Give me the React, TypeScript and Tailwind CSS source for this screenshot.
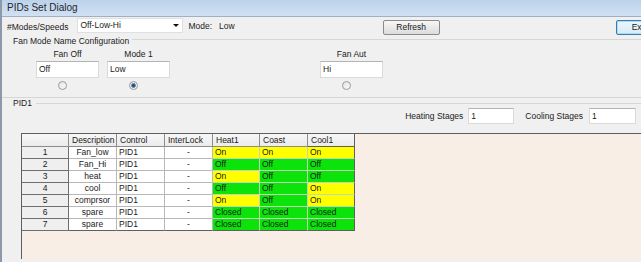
import React from 'react';

type Cell = 'On' | 'Off' | 'Closed';

const rows: { n: number; desc: string; states: Cell[] }[] = [
  { n: 1, desc: 'Fan_low', states: ['On', 'On', 'On'] },
  { n: 2, desc: 'Fan_Hi', states: ['Off', 'Off', 'Off'] },
  { n: 3, desc: 'heat', states: ['On', 'Off', 'Off'] },
  { n: 4, desc: 'cool', states: ['Off', 'Off', 'On'] },
  { n: 5, desc: 'comprsor', states: ['On', 'Off', 'On'] },
  { n: 6, desc: 'spare', states: ['Closed', 'Closed', 'Closed'] },
  { n: 7, desc: 'spare', states: ['Closed', 'Closed', 'Closed'] },
];

function Radio({ checked }: { checked?: boolean }) {
  return (
    <div className="w-[9px] h-[9px] rounded-full border border-[#9a9a9a] bg-gradient-to-br from-[#e4e4e4] to-[#fafafa] flex items-center justify-center">
      {checked && <div className="w-[5px] h-[5px] rounded-full bg-[#1d4e7c] border border-[#5d8ab3]" />}
    </div>
  );
}

function TextBox({ value, w }: { value: string; w: string }) {
  return (
    <div className={`${w} shrink-0 bg-white border border-[#dadada] border-t-[#b4b4b4] flex items-center pl-[2px]`}>
      {value}
    </div>
  );
}

export default function App() {
  const cellColor = (s: Cell) => (s === 'On' ? 'bg-[#ffff00]' : 'bg-[#0be30b]');

  return (
    <div className="w-[641px] h-[262px] overflow-hidden bg-[#f0f0f0] border-l-2 border-[#8d99a8] text-[8.5px] leading-none text-[#1a1a1a] font-['Liberation_Sans',Arial,sans-serif] flex flex-col">
      {/* title bar */}
      <div className="h-[17px] shrink-0 bg-gradient-to-b from-[#bcd2ea] to-[#d1e1f2] border-b border-[#9fb0c3] flex items-center pl-[5px] text-[10px] text-[#1e2630]">
        PIDs Set Dialog
      </div>

      {/* modes row */}
      <div className="h-[19px] shrink-0 flex items-start whitespace-nowrap">
        <span className="shrink-0 ml-[5px] mt-[6px]">#Modes/Speeds</span>
        <div className="shrink-0 ml-[9px] mt-[1px] w-[106px] h-[15px] bg-white border border-[#e0e0e0] flex items-center pl-[2px]">
          <span className="flex-1">Off-Low-Hi</span>
          <span className="mr-[3px] w-0 h-0 border-l-[3px] border-r-[3px] border-t-[3px] border-l-transparent border-r-transparent border-t-[#111]" />
        </div>
        <span className="shrink-0 ml-[5px] mt-[5px]">Mode:</span>
        <span className="shrink-0 ml-[7px] mt-[5px]">Low</span>
        <button className="shrink-0 ml-[148px] mt-[3px] w-[57px] h-[15px] rounded-[2px] border border-[#8a8a8a] bg-gradient-to-b from-[#f7f7f7] to-[#dcdcdc] text-[8.5px] text-[#1a1a1a]">
          Refresh
        </button>
        <button className="shrink-0 ml-[176px] mt-[3px] w-[50px] h-[15px] rounded-[2px] border border-[#3d7bad] bg-gradient-to-b from-[#eaf6fd] to-[#d9ebf7] text-[8.5px] text-left pl-[15px] text-[#1a1a1a] shadow-[inset_0_0_0_1px_#a9dbf6]">
          Exit
        </button>
      </div>

      {/* fan mode group header */}
      <div className="h-[11px] shrink-0 flex items-start">
        <span className="ml-[11px] mt-[1px]">Fan Mode Name Configuration</span>
        <div className="flex-1 ml-[3px] mt-[3px] border-t border-[#d6d6d6]" />
      </div>

      {/* fan mode columns */}
      <div className="shrink-0 flex items-start mt-[2px]">
        {[
          { label: 'Fan Off', value: 'Off', ml: 'ml-[34px]', checked: false },
          { label: 'Mode 1', value: 'Low', ml: 'ml-[8px]', checked: true },
          { label: 'Fan Aut', value: 'Hi', ml: 'ml-[150px]', checked: false },
        ].map(c => (
          <div key={c.label} className={`${c.ml} w-[63px] shrink-0 flex flex-col items-center`}>
            <div className="h-[11px] flex items-center">{c.label}</div>
            <div className="mt-[1px]">
              <TextBox value={c.value} w="w-[63px] h-[17px]" />
            </div>
            <div className="mt-[3px] mr-[10px]">
              <Radio checked={c.checked} />
            </div>
          </div>
        ))}
      </div>

      <div className="mt-[7px] shrink-0 border-t border-[#d6d6d6]" />

      {/* PID1 group */}
      <div className="h-[10px] shrink-0 flex items-start">
        <span className="ml-[11px] mt-[1px]">PID1</span>
        <div className="flex-1 ml-[4px] mt-[5px] border-t border-[#d6d6d6]" />
      </div>

      <div className="h-[16px] shrink-0 flex items-center justify-end whitespace-nowrap">
        <span>Heating Stages</span>
        <TextBox value="1" w="ml-[5px] w-[46px] h-[16px]" />
        <span className="ml-[11px]">Cooling Stages</span>
        <TextBox value="1" w="ml-[6px] w-[47px] h-[16px] mr-[5px]" />
      </div>

      {/* grid */}
      <div className="mt-[9px] ml-[19px] h-[126px] shrink-0 border-t border-l border-[#5f5f5f] bg-[#f9eee5]">
        <div className="grid grid-cols-[47px_48px_48px_48px_47px_48px_47px] w-max">
          {['', 'Description', 'Control', 'InterLock', 'Heat1', 'Coast', 'Cool1'].map((h, i) => (
            <div
              key={i}
              className={`h-[13px] bg-gradient-to-b from-[#f7f7f7] to-[#ebebeb] border-b border-r flex items-center pl-[3px] ${
                i === 6 ? 'border-[#5f5f5f]' : 'border-[#8c8c8c]'
              }`}
            >
              {h}
            </div>
          ))}
          {rows.map((r, ri) => {
            const last = ri === rows.length - 1;
            const bb = last ? 'border-b-[#5f5f5f]' : '';
            return (
              <React.Fragment key={r.n}>
                <div className="h-[12px] bg-[#efefef] border-b border-r border-[#6e6e6e] flex items-center justify-center">
                  {r.n}
                </div>
                <div className={`h-[12px] bg-white border-b border-r border-[#b8b8b8] ${bb} flex items-center justify-center`}>
                  {r.desc}
                </div>
                <div className={`h-[12px] bg-white border-b border-r border-[#b8b8b8] ${bb} flex items-center pl-[2px]`}>
                  PID1
                </div>
                <div className={`h-[12px] bg-white border-b border-r border-[#b8b8b8] ${bb} flex items-center justify-center`}>
                  -
                </div>
                {r.states.map((s, si) => (
                  <div
                    key={si}
                    className={`h-[12px] ${cellColor(s)} border-b border-r flex items-center pl-[2px] ${
                      si === 2 ? 'border-r-[#5f5f5f]' : 'border-r-[#c4d6b4]'
                    } ${last ? 'border-b-[#5f5f5f]' : 'border-b-[#c4d6b4]'}`}
                  >
                    {s}
                  </div>
                ))}
              </React.Fragment>
            );
          })}
        </div>
      </div>
    </div>
  );
}
